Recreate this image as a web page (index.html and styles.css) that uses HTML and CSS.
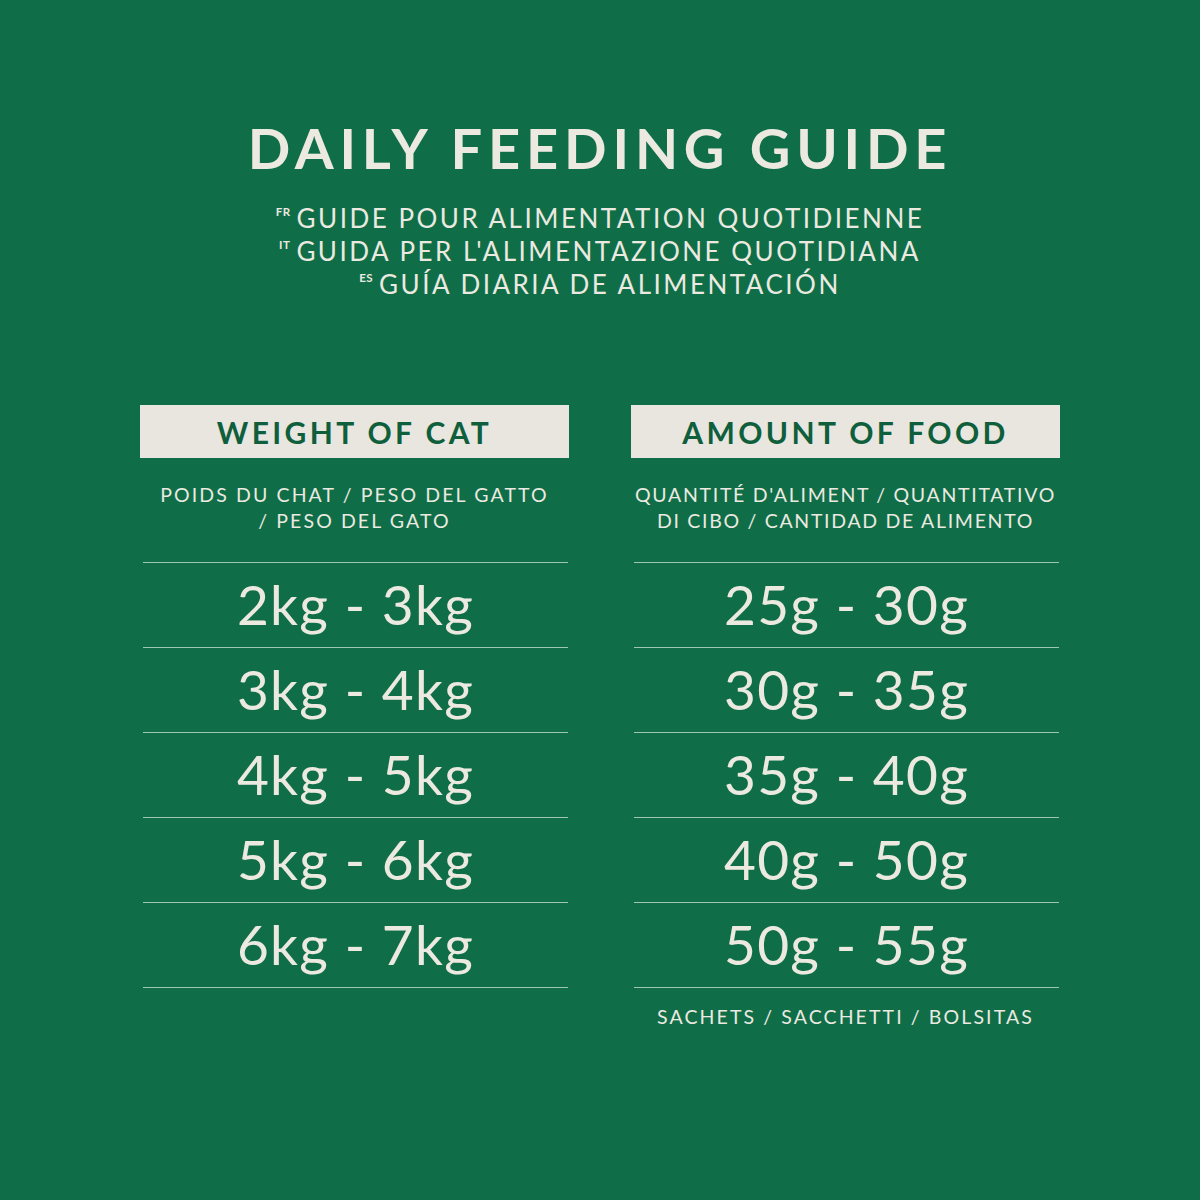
FILE: index.html
```html
<!DOCTYPE html>
<html lang="en">
<head>
<meta charset="utf-8">
<title>Daily Feeding Guide</title>
<link rel="stylesheet" href="styles.css">
</head>
<body>
<main class="page">
  <h1 class="title">DAILY FEEDING GUIDE</h1>
  <div class="subs">
    <p class="sub"><span class="lang">FR</span>GUIDE POUR ALIMENTATION QUOTIDIENNE</p>
    <p class="sub"><span class="lang">IT</span>GUIDA PER L'ALIMENTAZIONE QUOTIDIANA</p>
    <p class="sub"><span class="lang">ES</span>GUÍA DIARIA DE ALIMENTACIÓN</p>
  </div>
  <section class="table">
    <div class="col">
      <div class="col-head">WEIGHT OF CAT</div>
      <div class="col-sub">POIDS DU CHAT / PESO DEL GATTO<br>/ PESO DEL GATO</div>
      <div class="rows">
        <div class="row">2kg - 3kg</div>
        <div class="row">3kg - 4kg</div>
        <div class="row">4kg - 5kg</div>
        <div class="row">5kg - 6kg</div>
        <div class="row">6kg - 7kg</div>
      </div>
    </div>
    <div class="col">
      <div class="col-head">AMOUNT OF FOOD</div>
      <div class="col-sub col-sub-wide">QUANTITÉ D'ALIMENT / QUANTITATIVO<br>DI CIBO / CANTIDAD DE ALIMENTO</div>
      <div class="rows">
        <div class="row">25g - 30g</div>
        <div class="row">30g - 35g</div>
        <div class="row">35g - 40g</div>
        <div class="row">40g - 50g</div>
        <div class="row">50g - 55g</div>
      </div>
      <div class="note">SACHETS / SACCHETTI / BOLSITAS</div>
    </div>
  </section>
</main>
</body>
</html>
```
FILE: styles.css
```css
html, body {
  margin: 0;
  padding: 0;
}
body {
  background: #0f6e47;
  color: #ece9e1;
  font-family: Lato, "Open Sans", sans-serif;
}
.page {
  width: 1200px;
  height: 1200px;
  box-sizing: border-box;
  padding-top: 114px;
  text-align: center;
}
.title {
  margin: 0;
  font-size: 56px;
  font-weight: 700;
  letter-spacing: 5.8px;
  line-height: 68px;
}
.subs {
  margin-top: 20px;
}
.sub {
  margin: 0;
  height: 33px;
  font-size: 26px;
  font-weight: 400;
  letter-spacing: 2.5px;
  line-height: 33px;
}
.lang {
  display: inline-block;
  font-size: 11.5px;
  font-weight: 700;
  line-height: 0;
  vertical-align: 12px;
  letter-spacing: 0.5px;
  margin-right: 6px;
}
.table {
  margin-top: 104px;
  display: grid;
  grid-template-columns: 429px 429px;
  column-gap: 62px;
  justify-content: center;
}
.col-head {
  height: 53px;
  background: #e9e6df;
  color: #0f5e3c;
  font-size: 30px;
  font-weight: 700;
  letter-spacing: 3.4px;
  line-height: 55px;
}
.col-sub {
  height: 104px;
  box-sizing: border-box;
  padding-top: 24px;
  font-size: 19.5px;
  letter-spacing: 2.1px;
  line-height: 26px;
  white-space: nowrap;
}
.col-sub-wide {
  letter-spacing: 1.7px;
}
.rows {
  margin: 0 1px 0 3px;
  border-bottom: 1.5px solid #9fc7af;
}
.row {
  height: 85px;
  box-sizing: border-box;
  border-top: 1.5px solid #9fc7af;
  font-size: 55px;
  line-height: 82px;
  letter-spacing: 1.3px;
}
.note {
  margin-top: 16px;
  font-size: 19.5px;
  letter-spacing: 2.1px;
  line-height: 26px;
}
```
